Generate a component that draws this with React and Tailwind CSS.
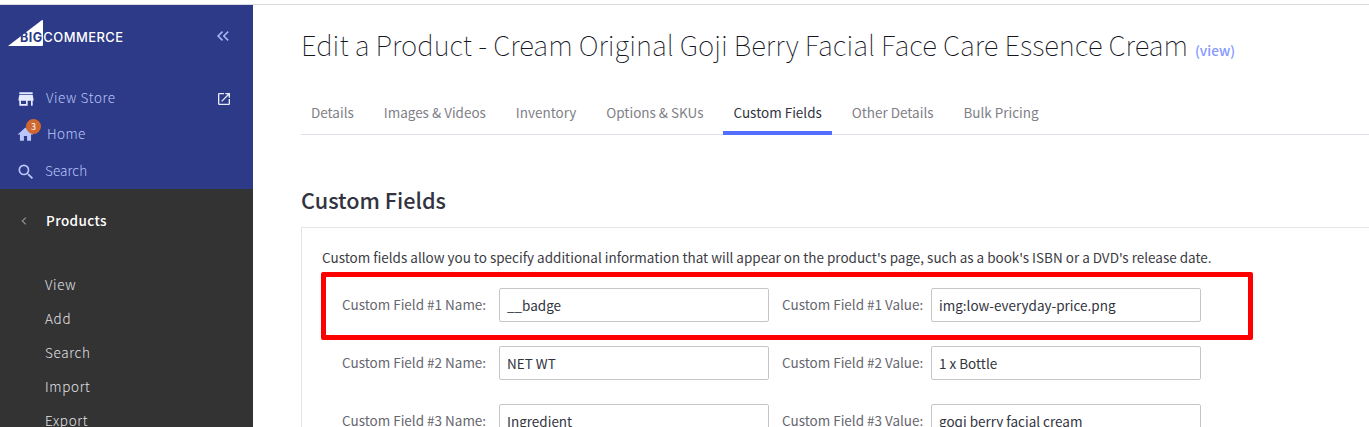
import { MdStore, MdHome, MdSearch, MdOpenInNew } from "react-icons/md";

const tabs = ["Details", "Images & Videos", "Inventory", "Options & SKUs", "Custom Fields", "Other Details", "Bulk Pricing"];
const subItems = ["View", "Add", "Search", "Import", "Export"];
const fields = [
  ["__badge", "img:low-everyday-price.png"],
  ["NET WT", "1 x Bottle"],
  ["Ingredient", "goqi berry facial cream"],
];

function Logo() {
  return (
    <svg width="118" height="28" viewBox="0 0 118 28" className="shrink-0">
      <path d="M1 27 34.4 1.4Q36 .2 36 2V26Q36 27 35 27Z" fill="#fff" />
      <text x="13" y="22.7" fontFamily="Inter, sans-serif" fontWeight="700" fontSize="13" textLength="22.5" lengthAdjust="spacingAndGlyphs" fill="#2d3a87">BIG</text>
      <text x="36.3" y="22.7" fontFamily="Inter, sans-serif" fontWeight="500" fontSize="13" textLength="80.2" lengthAdjust="spacingAndGlyphs" fill="#fff">COMMERCE</text>
    </svg>
  );
}

function Sidebar() {
  return (
    <aside className="flex h-full w-[253px] shrink-0 flex-col bg-[#333333]">
      <div className="h-[184px] shrink-0 bg-[#2d3a87] text-[#b9c5fb] font-light tracking-[0.45px]">
        <div className="flex h-[74px] items-start justify-between pl-[7px] pr-[24px] pt-[14px]">
          <Logo />
          <svg width="12" height="10" viewBox="0 0 12 10" className="mt-[12px]" fill="none" stroke="#a9b6f5" strokeWidth="1.6">
            <path d="M5.5.6 1.1 5l4.4 4.4M11.2.6 6.8 5l4.4 4.4" />
          </svg>
        </div>
        <div className="flex h-[36px] items-center pl-4 pr-[21px]">
          <MdStore size={20} className="mt-[3px] text-[#e6eaff]" />
          <span className="ml-[10px] flex-1 tracking-[0.6px]">View Store</span>
          <MdOpenInNew size={16} className="mt-[3px] text-[#e6eaff]" />
        </div>
        <div className="flex h-[36px] items-center pl-4">
          <span className="relative mt-[3px]">
            <MdHome size={19} className="text-[#b9c5fb]" />
            <span className="absolute left-[10px] top-[-6px] flex size-[15px] items-center justify-center rounded-full bg-[#d0672f] text-[9px] leading-[15px] font-normal tracking-normal text-white">3</span>
          </span>
          <span className="ml-[12px]">Home</span>
        </div>
        <div className="flex h-[38px] items-center pl-4">
          <MdSearch size={20} className="mt-[3px] text-[#b9c5fb]" />
          <span className="ml-[9px] tracking-[0.1px]">Search</span>
        </div>
      </div>
      <div className="flex h-[62px] shrink-0 items-center pl-[21px]">
        <svg width="6" height="8" viewBox="0 0 6 8" fill="none" stroke="#8c8c93" strokeWidth="1.3" className="mt-px">
          <path d="M4.8.6 1.3 4l3.5 3.4" />
        </svg>
        <span className="ml-[19px] font-medium tracking-[0.4px] text-white">Products</span>
      </div>
      <ul className="flex flex-col pt-4 pl-[45px] font-light tracking-[0.65px] text-[#e2e2e8]">
        {subItems.map((t) => (
          <li key={t} className="h-[34px] leading-[34px]">{t}</li>
        ))}
      </ul>
    </aside>
  );
}

function Field({ value }) {
  return (
    <div className="flex h-[34px] w-[270px] shrink-0 items-center rounded-[2px] border border-[#c6c6ca] pl-[7px] text-[#313440]">
      {value}
    </div>
  );
}

export default function App() {
  return (
    <div className="flex h-[427px] w-[1369px] flex-col overflow-hidden bg-white whitespace-nowrap text-[13.49px] leading-[20px] font-['Noto_Sans_CJK_JP','Noto_Sans_CJK_SC',sans-serif]">
      <div className="h-[5px] shrink-0 border-b border-[#d9d9e0]" />
      <div className="flex min-h-0 flex-1">
        <Sidebar />
        <main className="min-w-0 flex-1 pl-[48px]">
          <h1 className="flex h-[78px] items-center text-[27.6px] leading-[40px] font-thin text-[#15171f]">
            Edit a Product - Cream Original Goji Berry Facial Face Care Essence Cream
            <a className="ml-[7px] mt-[11px] text-[13.6px] leading-[20px] font-medium text-[#8498ff]">(view)</a>
          </h1>
          <nav className="flex h-[52px] gap-[9.9px] border-b border-[#dfdfea] text-[#808088]">
            {tabs.map((t) => (
              <span
                key={t}
                className={
                  t === "Custom Fields"
                    ? "h-[52px] border-b-4 border-[#536dfe] px-[10px] pt-[19px] text-[#313440]"
                    : "h-[52px] px-[10px] pt-[19px]"
                }
              >
                {t}
              </span>
            ))}
          </nav>
          <h2 className="mt-[50px] h-[42px] text-[21.63px] leading-[30px] font-medium text-[#313440]">Custom Fields</h2>
          <section className="relative h-[300px] border-l border-t border-[#e5e5e8] pl-[20px] pt-[19px]">
            <p className="text-[#3c3c44]">
              Custom fields allow you to specify additional information that will appear on the product's page, such as a book's ISBN or a DVD's release date.
            </p>
            <div className="mt-[21px] flex flex-col gap-[24px] pl-[20px]">
              {fields.map(([name, value], i) => (
                <div key={name} className="flex h-[34px] items-center text-[#66666e]">
                  <span className="w-[157px] pb-[2px]">Custom Field #{i + 1} Name:</span>
                  <Field value={name} />
                  <span className="ml-[13px] w-[149px] pb-[2px]">Custom Field #{i + 1} Value:</span>
                  <Field value={value} />
                </div>
              ))}
            </div>
            <div className="absolute left-[19px] top-[44px] h-[68px] w-[932px] rounded-[2px] border-5 border-[#ff0000]" />
          </section>
        </main>
      </div>
    </div>
  );
}
